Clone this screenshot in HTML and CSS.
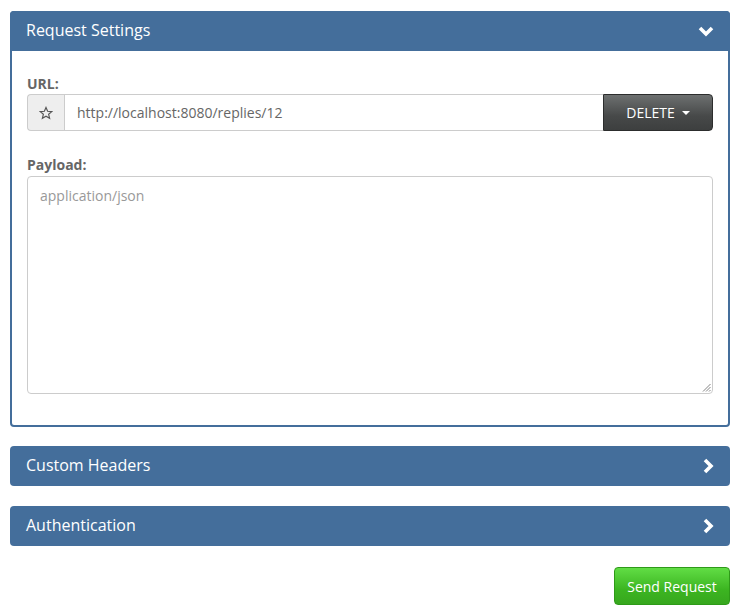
FILE: index.html
```html
<!DOCTYPE html>
<html>
<head>
<meta charset="utf-8">
<link rel="stylesheet" href="styles.css">
</head>
<body>
<div class="page">
  <div class="panel open">
    <div class="panel-heading">
      <span class="title">Request Settings</span>
      <svg class="chev" width="16" height="12" viewBox="0 0 16 12"><polyline points="2,3 8,9 14,3" fill="none" stroke="#fff" stroke-width="3.6" stroke-linecap="butt" stroke-linejoin="miter"/></svg>
    </div>
    <div class="panel-body">
      <label class="lbl">URL:</label>
      <div class="input-group">
        <span class="addon"><svg width="14" height="14" viewBox="0 0 24 24"><polygon points="12,2.5 14.8,9.1 21.9,9.6 16.5,14.2 18.2,21.2 12,17.4 5.8,21.2 7.5,14.2 2.1,9.6 9.2,9.1" fill="none" stroke="#555" stroke-width="2" stroke-linejoin="miter"/></svg></span>
        <span class="url">http://localhost:8080/replies/12</span>
        <span class="btn-method">DELETE <span class="caret"></span></span>
      </div>
      <label class="lbl lbl-payload">Payload:</label>
      <div class="textarea">
        <span class="ph">application/json</span>
        <svg class="grip" width="9" height="9" viewBox="0 0 9 9"><line x1="8.5" y1="1" x2="1" y2="8.5" stroke="#777" stroke-width="0.9"/><line x1="8.5" y1="4" x2="4" y2="8.5" stroke="#777" stroke-width="0.9"/><line x1="8.5" y1="7" x2="7" y2="8.5" stroke="#777" stroke-width="0.9"/></svg>
      </div>
    </div>
  </div>
  <div class="panel closed">
    <div class="panel-heading">
      <span class="title">Custom Headers</span>
      <svg class="chev-r" width="12" height="16" viewBox="0 0 12 16"><polyline points="3,2 9,8 3,14" fill="none" stroke="#fff" stroke-width="3.6"/></svg>
    </div>
  </div>
  <div class="panel closed">
    <div class="panel-heading">
      <span class="title">Authentication</span>
      <svg class="chev-r" width="12" height="16" viewBox="0 0 12 16"><polyline points="3,2 9,8 3,14" fill="none" stroke="#fff" stroke-width="3.6"/></svg>
    </div>
  </div>
  <div class="actions">
    <span class="btn-send">Send Request</span>
  </div>
</div>
</body>
</html>
```
FILE: styles.css
```css
html, body {
  margin: 0;
  padding: 0;
  background: #fff;
}
body {
  font-family: "Open Sans", "Liberation Sans", sans-serif;
  font-size: 14px;
  color: #666;
}
.page {
  padding: 11px 3px 0 10px;
  display: flex;
  flex-direction: column;
}
.panel {
  border: 2px solid #446e9b;
  border-radius: 4px;
  background: #fff;
}
.panel.closed {
  border: none;
  margin-top: 19px;
}
.panel.closed + .panel.closed {
  margin-top: 20px;
}
.panel-heading {
  background: #446e9b;
  color: #fff;
  height: 40px;
  box-sizing: border-box;
  display: flex;
  align-items: center;
  justify-content: space-between;
  padding: 0 16px;
  font-size: 16px;
}
.panel.open .panel-heading {
  margin: -2px -2px 0 -2px;
  border-radius: 4px 4px 0 0;
}
.panel.closed .panel-heading {
  border-radius: 4px;
}
.title {
  position: relative;
  top: -1px;
}
.panel-body {
  padding: 23px 15px 31px 15px;
}
.lbl {
  display: block;
  font-weight: bold;
  line-height: 20px;
  color: #666;
}
.input-group {
  display: flex;
  height: 37px;
}
.addon {
  width: 37px;
  box-sizing: border-box;
  background: #eee;
  border: 1px solid #ccc;
  border-right: none;
  border-radius: 4px 0 0 4px;
  display: flex;
  align-items: center;
  justify-content: center;
}
.url {
  flex: 1;
  border: 1px solid #ccc;
  border-right: none;
  display: flex;
  align-items: center;
  padding-left: 12px;
  color: #666;
}
.btn-method {
  width: 110px;
  box-sizing: border-box;
  background: linear-gradient(#6d7070, #474949 60%, #3d3f3f);
  border: 1px solid #2c2d2d;
  border-radius: 0 4px 4px 0;
  color: #fff;
  display: flex;
  align-items: center;
  justify-content: center;
  font-size: 14px;
}
.caret {
  display: inline-block;
  width: 0;
  height: 0;
  margin-left: 7px;
  border-top: 4px solid #fff;
  border-left: 4px solid transparent;
  border-right: 4px solid transparent;
}
.lbl-payload {
  margin-top: 24px;
}
.textarea {
  position: relative;
  height: 218px;
  box-sizing: border-box;
  border: 1px solid #ccc;
  border-radius: 4px;
  margin-top: 1px;
  padding: 9px 12px;
}
.ph {
  color: #999;
  line-height: 20px;
}
.grip {
  position: absolute;
  right: 1px;
  bottom: 1px;
}
.actions {
  display: flex;
  justify-content: flex-end;
  margin-top: 21px;
}
.btn-send {
  width: 116px;
  height: 38px;
  box-sizing: border-box;
  background: linear-gradient(#61dd45, #3cb521 60%, #37a71e);
  border: 1px solid #2e9a18;
  border-radius: 4px;
  color: #fff;
  display: flex;
  align-items: center;
  justify-content: center;
  font-size: 14px;
}
```
